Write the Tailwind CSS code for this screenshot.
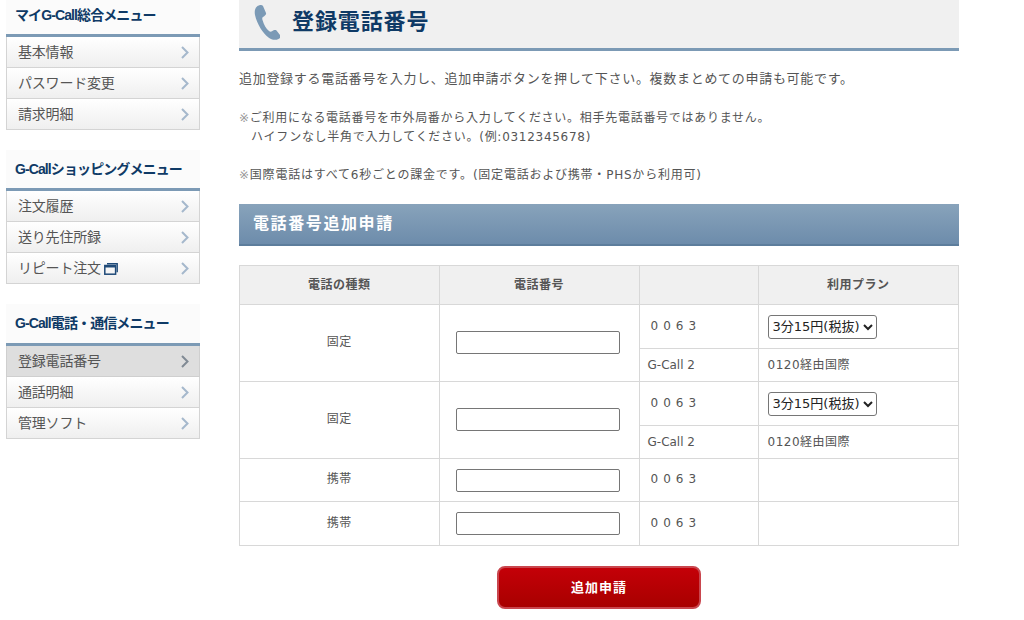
<!DOCTYPE html>
<html lang="ja">
<head>
  <meta charset="UTF-8" />
  <title>登録電話番号</title>
  <script src="https://cdn.jsdelivr.net/npm/@tailwindcss/browser@4"></script>
</head>
<body class="bg-white h-[620px] overflow-hidden font-['DejaVu_Sans','Noto_Sans_CJK_JP',sans-serif] text-[#555]">

<div class="flex">
  <!-- サイドメニュー -->
  <div class="w-[194px] ml-[6px] shrink-0">

    <div class="h-[34px] bg-[#fbfbfb] pl-[9px] flex items-center pb-[3px] font-['Liberation_Sans','Noto_Sans_CJK_JP',sans-serif] text-[14px] font-bold text-[#0f3a66] tracking-[-0.9px]">マイG-Call総合メニュー</div>
    <ul class="border-t-[3px] border-[#7c9ab5]">
      <li class="h-[31px] flex items-center justify-between pl-[11px] pr-[10px] text-[14px] tracking-[-0.2px] border border-t-0 border-[#d4d4d4] bg-gradient-to-b from-white to-[#efefef]">基本情報
        <svg width="8" height="13" viewBox="0 0 8 13" fill="none" stroke="#a5b8cc" stroke-width="2"><path d="M1 1l5.500 5.500L1 12"/></svg></li>
      <li class="h-[31px] flex items-center justify-between pl-[11px] pr-[10px] text-[14px] tracking-[-0.2px] border border-t-0 border-[#d4d4d4] bg-gradient-to-b from-white to-[#efefef]">パスワード変更
        <svg width="8" height="13" viewBox="0 0 8 13" fill="none" stroke="#a5b8cc" stroke-width="2"><path d="M1 1l5.500 5.500L1 12"/></svg></li>
      <li class="h-[31px] flex items-center justify-between pl-[11px] pr-[10px] text-[14px] tracking-[-0.2px] border border-t-0 border-[#d4d4d4] bg-gradient-to-b from-white to-[#efefef]">請求明細
        <svg width="8" height="13" viewBox="0 0 8 13" fill="none" stroke="#a5b8cc" stroke-width="2"><path d="M1 1l5.500 5.500L1 12"/></svg></li>
    </ul>

    <div class="mt-[20px] h-[38px] bg-[#fbfbfb] pl-[9px] flex items-center font-['Liberation_Sans','Noto_Sans_CJK_JP',sans-serif] text-[14px] font-bold text-[#0f3a66] tracking-[-0.9px]">G-Callショッピングメニュー</div>
    <ul class="border-t-[3px] border-[#7c9ab5]">
      <li class="h-[31px] flex items-center justify-between pl-[11px] pr-[10px] text-[14px] tracking-[-0.2px] border border-t-0 border-[#d4d4d4] bg-gradient-to-b from-white to-[#efefef]">注文履歴
        <svg width="8" height="13" viewBox="0 0 8 13" fill="none" stroke="#a5b8cc" stroke-width="2"><path d="M1 1l5.500 5.500L1 12"/></svg></li>
      <li class="h-[31px] flex items-center justify-between pl-[11px] pr-[10px] text-[14px] tracking-[-0.2px] border border-t-0 border-[#d4d4d4] bg-gradient-to-b from-white to-[#efefef]">送り先住所録
        <svg width="8" height="13" viewBox="0 0 8 13" fill="none" stroke="#a5b8cc" stroke-width="2"><path d="M1 1l5.500 5.500L1 12"/></svg></li>
      <li class="h-[31px] flex items-center justify-between pl-[11px] pr-[10px] text-[14px] tracking-[-0.2px] border border-t-0 border-[#d4d4d4] bg-gradient-to-b from-white to-[#efefef]">
        <span class="flex items-center gap-[3px]">リピート注文
          <svg class="mt-[1px]" width="14" height="12" viewBox="0 0 14 12" fill="none" stroke="#1f4a78"><path d="M3 .8h10.200v8.500" stroke-width="1.400"/><rect x=".8" y="2.500" width="10.800" height="8.700" stroke-width="1.500"/><path d="M1 3.500h10.500" stroke-width="2"/></svg>
        </span>
        <svg width="8" height="13" viewBox="0 0 8 13" fill="none" stroke="#a5b8cc" stroke-width="2"><path d="M1 1l5.500 5.500L1 12"/></svg></li>
    </ul>

    <div class="mt-[20px] h-[39px] bg-[#fbfbfb] pl-[9px] flex items-center font-['Liberation_Sans','Noto_Sans_CJK_JP',sans-serif] text-[14px] font-bold text-[#0f3a66] tracking-[-0.9px]">G-Call電話・通信メニュー</div>
    <ul class="border-t-[3px] border-[#7c9ab5]">
      <li class="h-[31px] flex items-center justify-between pl-[11px] pr-[10px] text-[14px] tracking-[-0.2px] border border-t-0 border-[#cfcfcf] bg-[#dedede]">登録電話番号
        <svg width="8" height="13" viewBox="0 0 8 13" fill="none" stroke="#808a94" stroke-width="2"><path d="M1 1l5.500 5.500L1 12"/></svg></li>
      <li class="h-[31px] flex items-center justify-between pl-[11px] pr-[10px] text-[14px] tracking-[-0.2px] border border-t-0 border-[#d4d4d4] bg-gradient-to-b from-white to-[#efefef]">通話明細
        <svg width="8" height="13" viewBox="0 0 8 13" fill="none" stroke="#a5b8cc" stroke-width="2"><path d="M1 1l5.500 5.500L1 12"/></svg></li>
      <li class="h-[31px] flex items-center justify-between pl-[11px] pr-[10px] text-[14px] tracking-[-0.2px] border border-t-0 border-[#d4d4d4] bg-gradient-to-b from-white to-[#efefef]">管理ソフト
        <svg width="8" height="13" viewBox="0 0 8 13" fill="none" stroke="#a5b8cc" stroke-width="2"><path d="M1 1l5.500 5.500L1 12"/></svg></li>
    </ul>
  </div>

  <!-- メイン -->
  <div class="w-[720px] ml-[39px] shrink-0">
    <div class="h-[51px] bg-[#f0f0f0] border-b-[3px] border-[#7c9ab5] flex items-center pl-[15px] pb-[4px]">
      <svg width="26" height="36" viewBox="0 0 26 36" fill="#7b9ab6"><path d="M3 2.500C5 1 8 .5 9 2l3 7c.5 1.500-1 3-3 4-.8.500-1 1.500-.5 3 1.500 5 3.500 8.500 6.500 11 1 .8 2 .8 3 .2 1.500-1 3.500-1.700 4.500-.7l4 5c1 1.500-.5 3-2 3.500-3 1.500-7 1-10-1.500C9 29.500 3 20 1 11 .3 7.500 1 4 3 2.500z"/></svg>
      <h1 class="ml-[12px] mb-[2px] text-[22px] font-bold text-[#0f3a66] tracking-[0.9px]">登録電話番号</h1>
    </div>

    <p class="mt-[18px] text-[13px] leading-[20px] tracking-[0.7px]">追加登録する電話番号を入力し、追加申請ボタンを押して下さい。複数まとめての申請も可能です。</p>

    <p class="mt-[20px] text-[12px] leading-[19px] tracking-[0.72px]"><span class="text-[#999]">※</span>ご利用になる電話番号を市外局番から入力してください。相手先電話番号ではありません。<br><span class="pl-[12px]">ハイフンなし半角で入力してください。(例:0312345678)</span></p>

    <p class="mt-[19px] text-[12px] leading-[19px] tracking-[0.78px]"><span class="text-[#999]">※</span>国際電話はすべて6秒ごとの課金です。(固定電話および携帯・PHSから利用可)</p>

    <h2 class="mt-[19px] h-[42px] pl-[14px] flex items-center border-b-2 border-[#5d7d9c] bg-gradient-to-b from-[#88a3bb] to-[#6d8cab] text-white text-[16px] font-bold tracking-[1.6px]">電話番号追加申請</h2>

    <table class="mt-[19px] w-full table-fixed border-collapse text-[12px] text-center tracking-[0.5px]">
      <colgroup><col class="w-[199.500px]"><col class="w-[200px]"><col class="w-[119px]"><col></colgroup>
      <tr class="h-[39px] bg-[#f0f0f0] font-bold">
        <th class="border border-[#d8d8d8] pb-[1px]">電話の種類</th>
        <th class="border border-[#d8d8d8] pb-[1px]">電話番号</th>
        <th class="border border-[#d8d8d8]"></th>
        <th class="border border-[#d8d8d8] pb-[1px]">利用プラン</th>
      </tr>
      <tr class="h-[44px]">
        <td rowspan="2" class="border border-[#d8d8d8] pb-[2px]">固定</td>
        <td rowspan="2" class="border border-[#d8d8d8] pb-[2px]"><input type="text" class="block ml-[16px] w-[164px] h-[23px] bg-white border border-[#767676] rounded-[2px]"></td>
        <td class="border border-[#d8d8d8] text-left pl-[11px] pb-[2px] tracking-[5px]">0063</td>
        <td class="border border-[#d8d8d8] text-left pl-[9px]"><select class="h-[24px] w-[109px] bg-white border border-[#767676] rounded-[3px] text-[13px] tracking-normal text-[#222]"><option>3分15円(税抜)</option></select></td>
      </tr>
      <tr class="h-[33px]">
        <td class="border border-[#d8d8d8] text-left pl-[8px] tracking-normal">G-Call 2</td>
        <td class="border border-[#d8d8d8] text-left pl-[9px]">0120経由国際</td>
      </tr>
      <tr class="h-[44px]">
        <td rowspan="2" class="border border-[#d8d8d8] pb-[2px]">固定</td>
        <td rowspan="2" class="border border-[#d8d8d8] pb-[2px]"><input type="text" class="block ml-[16px] w-[164px] h-[23px] bg-white border border-[#767676] rounded-[2px]"></td>
        <td class="border border-[#d8d8d8] text-left pl-[11px] pb-[2px] tracking-[5px]">0063</td>
        <td class="border border-[#d8d8d8] text-left pl-[9px]"><select class="h-[24px] w-[109px] bg-white border border-[#767676] rounded-[3px] text-[13px] tracking-normal text-[#222]"><option>3分15円(税抜)</option></select></td>
      </tr>
      <tr class="h-[33px]">
        <td class="border border-[#d8d8d8] text-left pl-[8px] tracking-normal">G-Call 2</td>
        <td class="border border-[#d8d8d8] text-left pl-[9px]">0120経由国際</td>
      </tr>
      <tr class="h-[43px]">
        <td class="border border-[#d8d8d8] pb-[2px]">携帯</td>
        <td class="border border-[#d8d8d8]"><input type="text" class="block ml-[16px] w-[164px] h-[23px] bg-white border border-[#767676] rounded-[2px]"></td>
        <td class="border border-[#d8d8d8] text-left pl-[11px] pb-[2px] tracking-[5px]">0063</td>
        <td class="border border-[#d8d8d8]"></td>
      </tr>
      <tr class="h-[44px]">
        <td class="border border-[#d8d8d8] pb-[2px]">携帯</td>
        <td class="border border-[#d8d8d8]"><input type="text" class="block ml-[16px] w-[164px] h-[23px] bg-white border border-[#767676] rounded-[2px]"></td>
        <td class="border border-[#d8d8d8] text-left pl-[11px] pb-[2px] tracking-[5px]">0063</td>
        <td class="border border-[#d8d8d8]"></td>
      </tr>
    </table>

    <div class="mt-[20px] flex justify-center">
      <button class="w-[204px] h-[43px] rounded-[8px] border-2 border-[#c9464e] bg-gradient-to-b from-[#c40008] to-[#a80000] text-white text-[13px] font-bold tracking-[1px]">追加申請</button>
    </div>
  </div>
</div>

</body>
</html>
